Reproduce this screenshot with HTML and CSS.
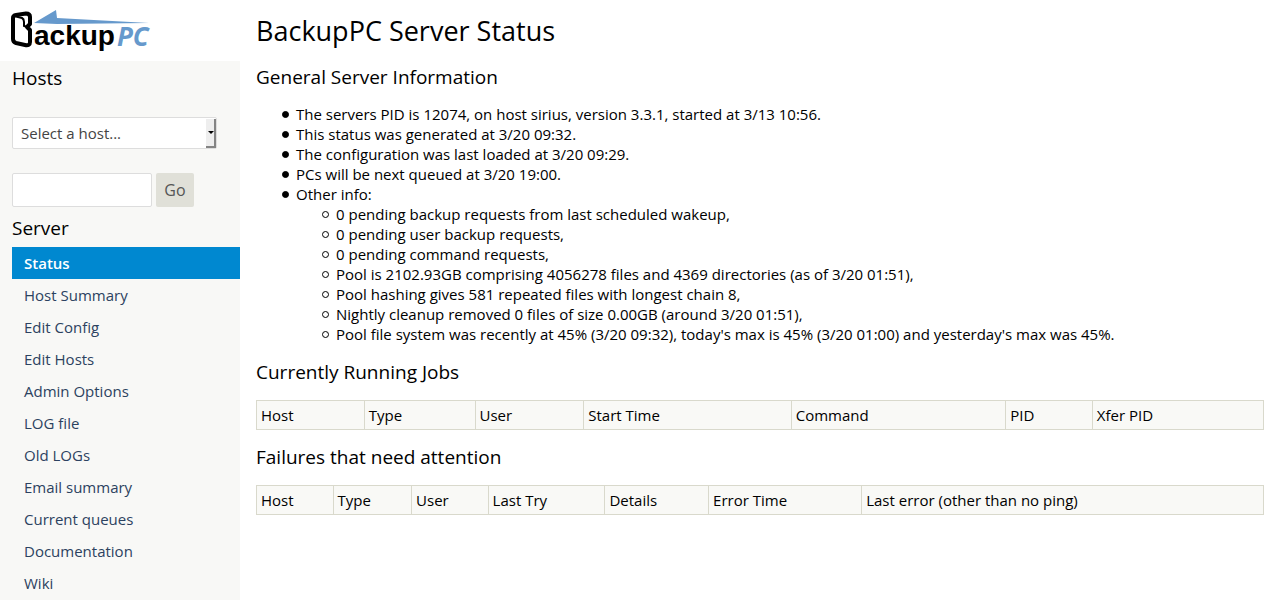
FILE: index.html
```html
<!DOCTYPE html>
<html lang="en">
<head>
<meta charset="utf-8">
<title>BackupPC Server Status</title>
<link rel="stylesheet" href="styles.css">
</head>
<body>
<div class="layout">
  <aside class="side">
    <a class="logo" href="#" aria-label="BackupPC">
      <svg class="logo-art" viewBox="0 0 160 61" aria-hidden="true">
        <path class="logo-arrow" d="M34 23L56 10L57 18L149 23L57 24Z"/>
        <path class="logo-b" d="M13 18L13 39Q13 42 16 43L25 45Q30 46 30 42L30 30L27 27L30 24L30 17Q30 13.500 26 13.500L16 15Q13 15.500 13 18"/>
        <path class="logo-fold" d="M14 16L22 18Q24 19 24 22L24 26L28 27"/>
        <text class="logo-word" x="34" y="45">ackup</text>
        <text class="logo-pc" x="117" y="46">PC</text>
      </svg>
    </a>
    <div class="panel">
      <h2 class="side-title">Hosts</h2>
      <form class="host-form">
        <div class="picker">
          <select class="host-select" aria-label="Select a host"><option>Select a host...</option></select>
          <span class="picker-arrow"></span>
        </div>
        <div class="search">
          <input class="host-input" type="text" aria-label="Host name">
          <button class="go" type="button">Go</button>
        </div>
      </form>
      <h2 class="side-title">Server</h2>
      <nav class="menu">
        <a class="menu-link current" href="#">Status</a>
        <a class="menu-link" href="#">Host Summary</a>
        <a class="menu-link" href="#">Edit Config</a>
        <a class="menu-link" href="#">Edit Hosts</a>
        <a class="menu-link" href="#">Admin Options</a>
        <a class="menu-link" href="#">LOG file</a>
        <a class="menu-link" href="#">Old LOGs</a>
        <a class="menu-link" href="#">Email summary</a>
        <a class="menu-link" href="#">Current queues</a>
        <a class="menu-link" href="#">Documentation</a>
        <a class="menu-link" href="#">Wiki</a>
      </nav>
    </div>
  </aside>
  <main class="content">
    <h1 class="page-title">BackupPC Server Status</h1>
    <h2 class="section-title">General Server Information</h2>
    <ul class="info">
      <li>The servers PID is 12074, on host sirius, version 3.3.1, started at 3/13 10:56.</li>
      <li>This status was generated at 3/20 09:32.</li>
      <li>The configuration was last loaded at 3/20 09:29.</li>
      <li>PCs will be next queued at 3/20 19:00.</li>
      <li>Other info:
        <ul class="info-sub">
          <li>0 pending backup requests from last scheduled wakeup,</li>
          <li>0 pending user backup requests,</li>
          <li>0 pending command requests,</li>
          <li>Pool is 2102.93GB comprising 4056278 files and 4369 directories (as of 3/20 01:51),</li>
          <li>Pool hashing gives 581 repeated files with longest chain 8,</li>
          <li>Nightly cleanup removed 0 files of size 0.00GB (around 3/20 01:51),</li>
          <li>Pool file system was recently at 45% (3/20 09:32), today's max is 45% (3/20 01:00) and yesterday's max was 45%.</li>
        </ul>
      </li>
    </ul>
    <h2 class="section-title">Currently Running Jobs</h2>
    <table class="grid jobs">
      <tr><th>Host</th><th>Type</th><th>User</th><th>Start Time</th><th>Command</th><th>PID</th><th>Xfer PID</th></tr>
    </table>
    <h2 class="section-title">Failures that need attention</h2>
    <table class="grid failures">
      <tr><th>Host</th><th>Type</th><th>User</th><th>Last Try</th><th>Details</th><th>Error Time</th><th>Last error (other than no ping)</th></tr>
    </table>
  </main>
</div>
</body>
</html>
```
FILE: styles.css
```css
*, *::before { box-sizing: border-box; }
body {
  margin: 0;
  background: #fff;
  color: #000;
  font: 15px/20px "Open Sans", "Noto Sans", sans-serif;
}
h1, h2, ul { margin: 0; font-weight: 400; }
.layout { display: flex; min-height: 100vh; }

.side { display: flex; flex-direction: column; flex: 0 0 240px; }
.logo { display: block; height: 61px; }
.logo-art { display: block; width: 160px; height: 61px; }
.logo-arrow { fill: #6699cc; }
.logo-b { fill: none; stroke: #000; stroke-width: 4; stroke-linejoin: round; }
.logo-fold { fill: none; stroke: #000; stroke-width: 2; stroke-linejoin: round; }
.logo-word { font: bold 28px "Liberation Sans", sans-serif; }
.logo-pc { fill: #6699cc; font: italic bold 26px "Open Sans", sans-serif; }

.panel { flex: 1; padding: 4px 0 0 12px; background: #f8f8f6; }
.side-title { font-size: 19px; line-height: 26px; }
.host-form { display: grid; gap: 24px; padding: 26px 0 8px; }
.picker { position: relative; width: 205px; }
.host-select {
  display: block;
  width: 100%;
  height: 32px;
  padding: 0 8px;
  border: 1px solid #ddd;
  border-radius: 2px;
  background: #fff;
  color: #444;
  font: inherit;
  appearance: none;
}
.picker-arrow {
  position: absolute;
  top: 2px;
  right: 1px;
  width: 10px;
  height: 29px;
  border-right: 2px solid #848484;
  border-bottom: 2px solid #848484;
  background: #eee;
  pointer-events: none;
}
.picker-arrow::after {
  content: "";
  position: absolute;
  top: 12px;
  right: 0;
  border: 3px solid transparent;
  border-top-color: #000;
}
.search { display: flex; gap: 4px; }
.host-input { width: 140px; height: 34px; border: 1px solid #ddd; border-radius: 2px; background: #fff; font: inherit; }
.go { width: 38px; height: 34px; padding: 0; border: 0; border-radius: 2px; background: #e0e0d8; color: #555; font: 16px/20px "Open Sans", sans-serif; }

.menu { margin-top: 6px; }
.menu-link { display: block; padding: 6px 12px; color: #2c4260; text-decoration: none; }
.current { background: #0088d0; color: #fff; font-weight: 600; }

.content { flex: 1; min-width: 0; padding: 12px 16px; }
.page-title { font-size: 27px; line-height: 38px; }
.section-title { margin-top: 14px; font-size: 19px; line-height: 26px; }
.info { margin: 14px 0 15px; padding-left: 40px; list-style: none; }
.info-sub { padding-left: 40px; list-style: none; }
.info li { position: relative; }
.info li::before {
  content: "";
  position: absolute;
  top: 7px;
  left: -14px;
  width: 7px;
  height: 7px;
  border: 1px solid #000;
  border-radius: 50%;
}
.info > li::before { background: #000; }
.grid { width: 100%; margin-top: 15px; border-collapse: collapse; table-layout: fixed; }
.grid th { padding: 4px; border: 1px solid #d9d9cc; background: #f9f9f6; font-weight: 400; text-align: left; }
.jobs th:nth-child(1) { width: 10.7%; }
.jobs th:nth-child(2) { width: 11%; }
.jobs th:nth-child(3) { width: 10.8%; }
.jobs th:nth-child(4) { width: 20.6%; }
.jobs th:nth-child(5) { width: 21.3%; }
.jobs th:nth-child(6) { width: 8.6%; }
.failures th:nth-child(1), .failures th:nth-child(3) { width: 7.6%; }
.failures th:nth-child(2) { width: 7.8%; }
.failures th:nth-child(4) { width: 11.6%; }
.failures th:nth-child(5) { width: 10.3%; }
.failures th:nth-child(6) { width: 15.2%; }
```
